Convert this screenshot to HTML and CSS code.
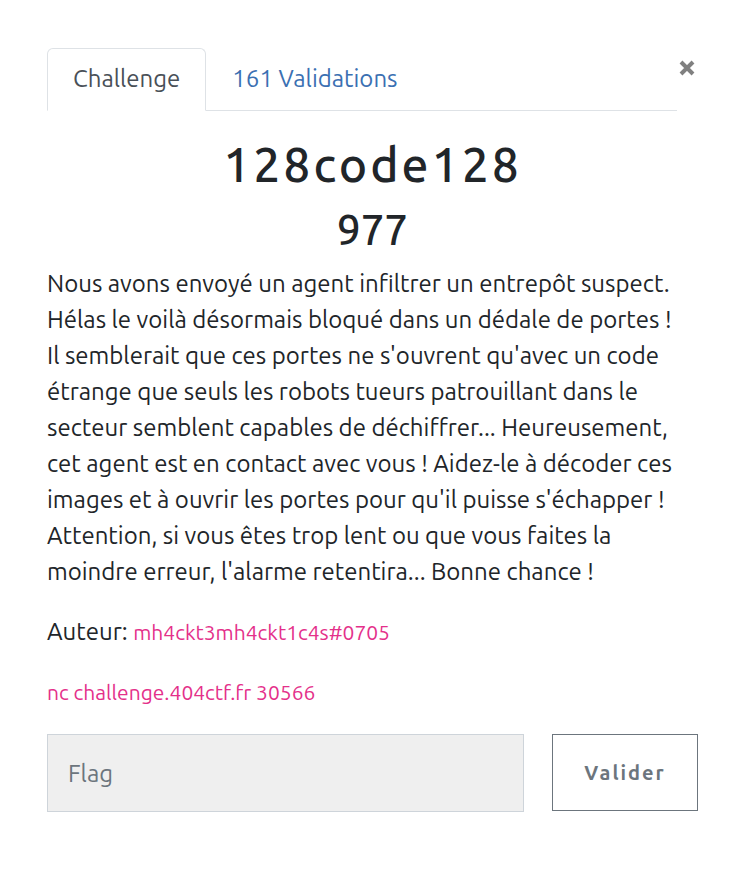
FILE: index.html
```html
<!DOCTYPE html>
<html lang="fr">
<head>
<meta charset="utf-8">
<meta name="viewport" content="width=device-width, initial-scale=1">
<title>128code128</title>
<link rel="stylesheet" href="styles.css">
</head>
<body>
<main class="challenge">
  <header class="top">
    <nav class="tabs">
      <a class="tab active" href="#challenge">Challenge</a>
      <a class="tab" href="#solves">161 Validations</a>
    </nav>
    <button class="close" type="button" aria-label="Fermer"><svg viewBox="0 0 16 16" width="16" height="16"><path d="M2 2L14 14M14 2L2 14"/></svg></button>
  </header>
  <section id="challenge">
    <h1 class="name">128code128</h1>
    <h2 class="value">977</h2>
    <p class="text">Nous avons envoyé un agent infiltrer un entrepôt suspect. Hélas le voilà désormais bloqué dans un dédale de portes&nbsp;! Il semblerait que ces portes ne s'ouvrent qu'avec un code étrange que seuls les robots tueurs patrouillant dans le secteur semblent capables de déchiffrer... Heureusement, cet agent est en contact avec vous&nbsp;! Aidez-le à décoder ces images et à ouvrir les portes pour qu'il puisse s'échapper&nbsp;! Attention, si vous êtes trop lent ou que vous faites la moindre erreur, l'alarme retentira... Bonne chance&nbsp;!</p>
    <p class="text">Auteur: <code>mh4ckt3mh4ckt1c4s#0705</code></p>
    <p class="text"><code>nc challenge.404ctf.fr 30566</code></p>
    <form class="answer">
      <input class="flag" type="text" placeholder="Flag" aria-label="Flag">
      <button class="submit" type="button">Valider</button>
    </form>
  </section>
</main>
</body>
</html>
```
FILE: styles.css
```css
* {
  box-sizing: border-box;
}

body {
  margin: 0;
  background: #fff;
  color: #212529;
  font: 24px/36px Ubuntu, "Noto Sans", sans-serif;
}

.challenge {
  padding: 48px 46px 48px 47px;
}

.top {
  display: flex;
  align-items: flex-start;
}

.tabs {
  display: flex;
  flex: 1;
  border-bottom: 1px solid #dee2e6;
}

.tab {
  margin-bottom: -1px;
  padding: 12px 25px 13px;
  border: 1px solid transparent;
  border-radius: 6px 6px 0 0;
  color: #3b70b2;
  text-decoration: none;
}

.tab.active {
  border-color: #dee2e6 #dee2e6 #fff;
  background: #fff;
  color: #495057;
}

.close {
  display: flex;
  margin: 12px 3px 0 2px;
  padding: 0;
  border: 0;
  background: none;
}

.close path {
  fill: none;
  stroke: #808080;
  stroke-width: 4;
}

.name,
.value {
  margin: 0;
  font-weight: 500;
  text-align: center;
}

.name {
  padding-top: 23px;
  font-size: 48px;
  line-height: 60px;
  letter-spacing: 3px;
}

.value {
  margin: 12px 0;
  font-size: 42px;
  line-height: 48px;
}

.text {
  margin: 0 0 24px;
  padding-right: 12px;
}

code {
  color: #e4308a;
  font-family: inherit;
  font-size: 21px;
}

.answer {
  display: flex;
  gap: 28px;
}

.flag {
  flex: 1;
  min-width: 0;
  height: 78px;
  padding: 0 20px;
  border: 1px solid #ced4da;
  border-radius: 0;
  background: #efefef;
  font: inherit;
}

.flag::placeholder {
  color: #6c757d;
  opacity: 1;
}

.submit {
  width: 146px;
  height: 77px;
  border: 1px solid #6c757d;
  background: #fff;
  color: #6c757d;
  font: bold 20px/30px Ubuntu, "Noto Sans", sans-serif;
  letter-spacing: 2px;
}
```
